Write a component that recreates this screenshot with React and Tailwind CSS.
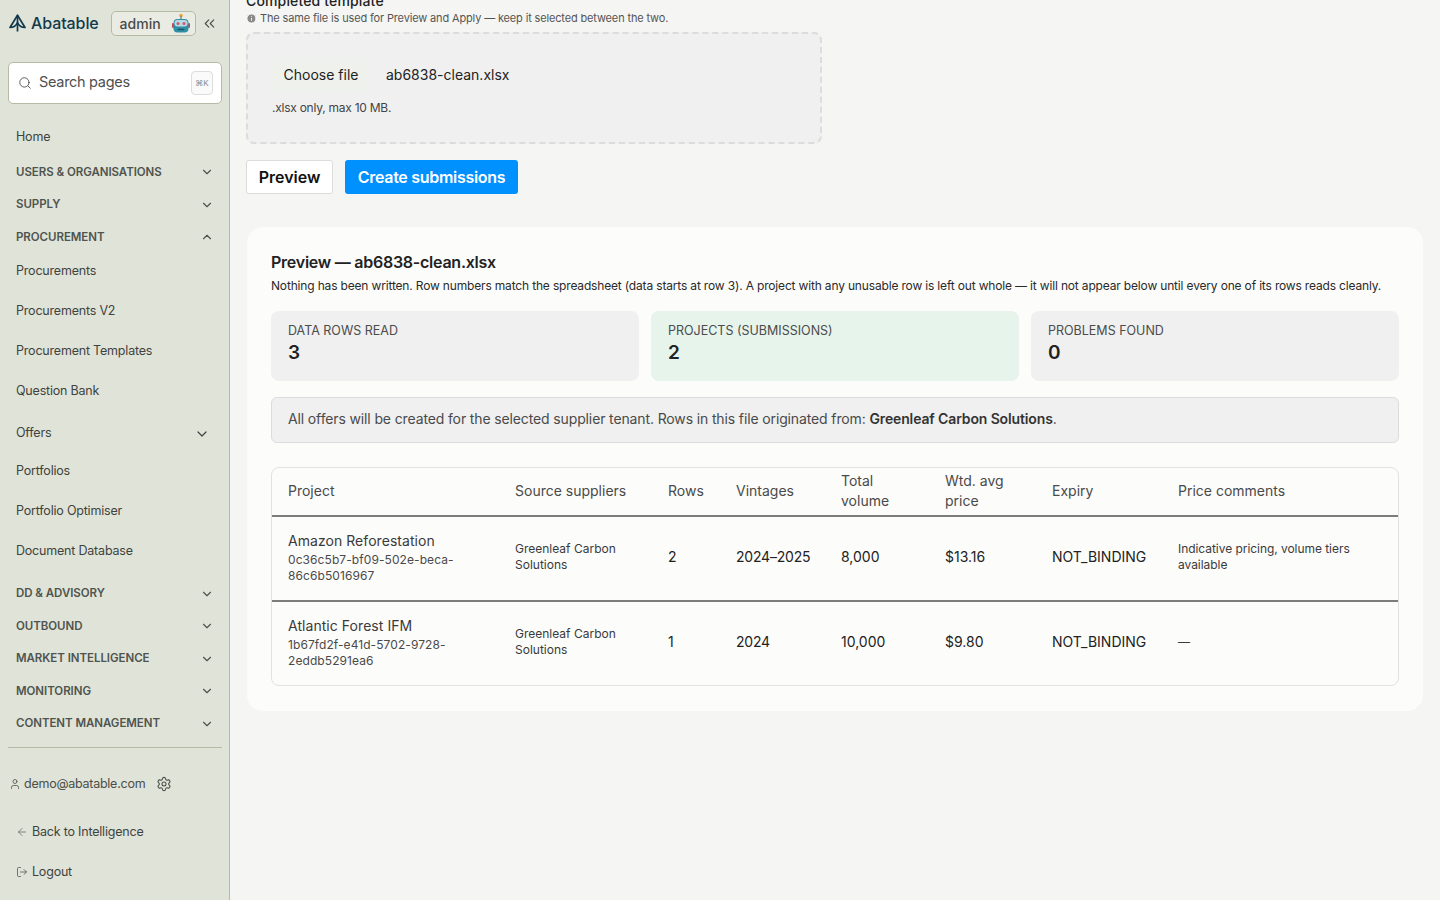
import React from 'react';
import { ChevronDown, ChevronUp, ChevronsLeft, Search, User, Settings, ArrowLeft, LogOut, Info } from 'lucide-react';

const SectionRow = ({ label, open }) => (
    <div className="flex items-center justify-between h-[32.5px] pl-4 pr-[15px] text-[11.5px] tracking-[-0.05px] font-semibold text-[#4f544f] uppercase">
        <span className="pb-[2px]">{label}</span>
        <span className="pb-[2px]">{open ? <ChevronUp size={14} strokeWidth={2} /> : <ChevronDown size={14} strokeWidth={2} />}</span>
    </div>
);

const LinkRow = ({ label }) => (
    <div className="flex items-center h-10 pl-4 text-[12.5px] tracking-[-0.2px] text-[#3f433f]">{label}</div>
);

const Stat = ({ label, value, green }) => (
    <div className={`flex-1 h-[70px] rounded-lg px-[17px] pt-[11px] ${green ? 'bg-[#e6f4ec]' : 'bg-[#f0f0f0]'}`}>
        <div className="text-[12.5px] leading-[18px] text-[#4b4b4b]">{label}</div>
        <div className="text-[19px] leading-[26px] font-semibold text-[#222]">{value}</div>
    </div>
);

const rows = [
    { name: 'Amazon Reforestation', id: ['0c36c5b7-bf09-502e-beca-', '86c6b5016967'], rows: '2', vintages: '2024–2025', volume: '8,000', price: '$13.16', comments: ['Indicative pricing, volume tiers', 'available'] },
    { name: 'Atlantic Forest IFM', id: ['1b67fd2f-e41d-5702-9728-', '2eddb5291ea6'], rows: '1', vintages: '2024', volume: '10,000', price: '$9.80', comments: ['—'] },
];

export default function App() {
    return (
        <div className="flex h-[900px] overflow-hidden bg-[#f5f5f3] font-['Inter',sans-serif]">
            {/* Sidebar */}
            <aside className="w-[230px] shrink-0 h-full bg-[#e0e3d8] border-r border-[#b6baa5] flex flex-col">
                <div className="flex items-center h-[46px] pl-[9px] mb-4">
                    <svg width="17" height="18" viewBox="0 0 17 18" fill="none" stroke="#123a4d" strokeWidth="1.7">
                        <path d="M8.5 1.2 L1 13.5 C4 13.5 7 12 8.5 8.5 C10 12 13 13.5 16 13.5 Z" strokeLinejoin="round" />
                        <path d="M8.5 1.2 V17.5" />
                    </svg>
                    <span className="ml-[5px] text-[16px] tracking-[-0.1px] font-medium text-[#123a4d]">Abatable</span>
                    <div className="ml-3 flex items-center justify-between w-[85px] h-[25px] rounded-[5px] border border-[#b6baa5] bg-[#eaece4] pl-2 pr-[5px]">
                        <span className="text-[14px] font-medium text-[#4a4a4a]">admin</span>
                        <svg width="18" height="20" viewBox="0 0 18 20">
                            <circle cx="9" cy="2.6" r="1.8" fill="#e8a33a" />
                            <rect x="8.3" y="3" width="1.4" height="4" fill="#7c8b93" />
                            <rect x="0" y="10" width="2" height="5" rx="1" fill="#c0485a" />
                            <rect x="16" y="10" width="2" height="5" rx="1" fill="#c0485a" />
                            <rect x="1.5" y="6" width="15" height="13.5" rx="4" fill="#2f8fa6" />
                            <rect x="2.5" y="7" width="13" height="6.5" rx="3" fill="#b9d9e4" />
                            <circle cx="6" cy="10.4" r="1.5" fill="#d0586a" />
                            <circle cx="12" cy="10.4" r="1.5" fill="#d0586a" />
                            <rect x="5.5" y="15.8" width="7" height="1.5" rx=".7" fill="#1e5566" />
                        </svg>
                    </div>
                    <ChevronsLeft size={17} className="ml-[5px] text-[#4a4f4a]" strokeWidth={1.6} />
                </div>

                <div className="ml-2 w-[214px] h-[42px] rounded-[5px] border border-[#b6baa5] bg-white flex items-center pl-[9px] pr-2">
                    <Search size={14} className="text-[#555]" strokeWidth={1.6} />
                    <span className="ml-[7px] pb-[2px] flex-1 text-[14.5px] tracking-[-0.3px] text-[#4f4f4f]">Search pages</span>
                    <span className="w-[22px] h-[24px] rounded-[4px] border border-[#dddddd] bg-[#fafafa] flex items-center justify-center text-[8px] text-[#8a8a8a]">⌘K</span>
                </div>

                <nav className="mt-[13px]">
                    <LinkRow label="Home" />
                    <SectionRow label="Users & Organisations" />
                    <SectionRow label="Supply" />
                    <SectionRow label="Procurement" open />
                    <div className="-mt-[3px]">
                        <LinkRow label="Procurements" />
                        <LinkRow label="Procurements V2" />
                        <LinkRow label="Procurement Templates" />
                        <LinkRow label="Question Bank" />
                    </div>
                    <div className="flex items-center justify-between h-10 pt-1 pl-4 pr-[19px] text-[12.5px] tracking-[-0.2px] text-[#3f433f]">
                        <span>Offers</span>
                        <ChevronDown size={16} strokeWidth={1.8} />
                    </div>
                    <LinkRow label="Portfolios" />
                    <LinkRow label="Portfolio Optimiser" />
                    <LinkRow label="Document Database" />
                    <div className="mt-[7px]">
                        <SectionRow label="DD & Advisory" />
                        <SectionRow label="Outbound" />
                        <SectionRow label="Market Intelligence" />
                        <SectionRow label="Monitoring" />
                        <SectionRow label="Content Management" />
                    </div>
                </nav>

                <div className="ml-2 w-[214px] mt-[6px] border-t border-[#b6baa5]" />

                <div className="flex items-center h-[72px] pl-[9px] text-[12.5px] tracking-[-0.25px] text-[#4a4f4a]">
                    <User size={12} strokeWidth={1.6} />
                    <span className="ml-[3px]">demo@abatable.com</span>
                    <Settings size={16} className="ml-[11px]" strokeWidth={1.6} />
                </div>
                <div className="flex items-center h-10 -mt-2 pl-4 text-[12.5px] tracking-[-0.2px] text-[#3f433f]">
                    <ArrowLeft size={12} className="mr-[4px] text-[#6b6f6b]" strokeWidth={1.6} />
                    Back to Intelligence
                </div>
                <div className="flex items-center h-10 pl-4 text-[12.5px] tracking-[-0.2px] text-[#3f433f]">
                    <LogOut size={12} className="mr-[4px] text-[#555]" strokeWidth={1.6} />
                    Logout
                </div>
            </aside>

            {/* Main */}
            <main className="flex-1 min-w-0 pl-4 pr-[17px]">
                <div className="-mt-2 h-[18px] text-[14px] leading-[18px] tracking-[0.15px] font-medium text-[#222]">Completed template</div>
                <div className="flex items-center h-[18px] -mt-[1px] text-[11px] tracking-[-0.15px] text-[#555]">
                    <Info size={11} className="mr-[3px] text-white fill-[#8a8a8a]" strokeWidth={2} />
                    The same file is used for Preview and Apply — keep it selected between the two.
                </div>
                <div className="mt-[5px] w-[576px] h-[112px] rounded-lg border-2 border-dashed border-[#dcdcdc] bg-[#f0f0f0] pl-6 pt-[23px]">
                    <div className="flex items-center">
                        <span className="h-[34px] w-[95px] flex items-center justify-center pl-[3px] bg-[#eff1ec] text-[14px] text-[#1e1e1e]">Choose file</span>
                        <span className="ml-[19px] text-[14px] text-[#222]">ab6838-clean.xlsx</span>
                    </div>
                    <div className="mt-[9px] text-[12px] leading-[16px] tracking-[-0.25px] text-[#444]">.xlsx only, max 10 MB.</div>
                </div>
                <div className="flex gap-3 mt-4">
                    <button className="h-[34px] w-[87px] rounded-[3px] border border-[#dcdcdc] bg-white text-[16px] font-semibold text-[#111]">Preview</button>
                    <button className="h-[34px] w-[173px] rounded-[3px] bg-[#0091ff] text-[16px] tracking-[-0.3px] font-semibold text-white">Create submissions</button>
                </div>

                {/* Preview card */}
                <section className="mt-[33px] ml-px h-[484px] rounded-2xl bg-[#fcfcfb] p-6">
                    <h2 className="text-[16px] leading-[22px] tracking-[-0.25px] font-semibold text-[#222]">Preview — ab6838-clean.xlsx</h2>
                    <p className="mt-[4px] text-[12px] leading-[18px] tracking-[-0.167px] text-[#2a2a2a] whitespace-nowrap">Nothing has been written. Row numbers match the spreadsheet (data starts at row 3). A project with any unusable row is left out whole — it will not appear below until every one of its rows reads cleanly.</p>
                    <div className="flex gap-3 mt-4">
                        <Stat label="DATA ROWS READ" value="3" />
                        <Stat label="PROJECTS (SUBMISSIONS)" value="2" green />
                        <Stat label="PROBLEMS FOUND" value="0" />
                    </div>
                    <div className="mt-4 h-[46px] rounded-md border border-[#dcdcdc] bg-[#f0f0f0] flex items-center px-4 pb-[3px] text-[14px] tracking-[-0.13px] text-[#4a4a4a]">
                        <span>All offers will be created for the selected supplier tenant. Rows in this file originated from: <b className="font-semibold text-[#333]">Greenleaf Carbon Solutions</b>.</span>
                    </div>
                    <div className="mt-6 rounded-lg border border-[#e2e2e2] overflow-hidden">
                        <table className="w-full table-fixed border-collapse text-left">
                            <colgroup>
                                <col className="w-[227px]" />
                                <col className="w-[153px]" />
                                <col className="w-[68px]" />
                                <col className="w-[105px]" />
                                <col className="w-[104px]" />
                                <col className="w-[107px]" />
                                <col className="w-[126px]" />
                                <col />
                            </colgroup>
                            <thead>
                                <tr className="h-[48px] border-b-2 border-[#7c7c7c] text-[14px] leading-5 text-[#4a4a4a]">
                                    <th className="px-4 pb-[2px] font-normal">Project</th>
                                    <th className="px-4 pb-[2px] font-normal">Source suppliers</th>
                                    <th className="px-4 pb-[2px] font-normal">Rows</th>
                                    <th className="px-4 pb-[2px] font-normal">Vintages</th>
                                    <th className="px-4 pb-[2px] font-normal">Total<br />volume</th>
                                    <th className="px-4 pb-[2px] font-normal">Wtd. avg<br />price</th>
                                    <th className="px-4 pb-[2px] font-normal">Expiry</th>
                                    <th className="px-4 pb-[2px] font-normal">Price comments</th>
                                </tr>
                            </thead>
                            <tbody>
                                {rows.map((r, i) => (
                                    <tr key={r.name} className={`text-[14px] text-[#222] ${i === 0 ? 'h-[85px] border-b-2 border-[#7c7c7c]' : 'h-[84px]'}`}>
                                        <td className="px-4 pb-[2px]">
                                            <div className="text-[14px] leading-[18px] tracking-[0.05px] text-[#3a3a3a]">{r.name}</div>
                                            <div className="mt-[2px] text-[12px] leading-4 tracking-[0.08px] text-[#4a4a4a]">{r.id[0]}<br />{r.id[1]}</div>
                                        </td>
                                        <td className="px-4 pb-[3px] text-[12px] leading-4 text-[#3a3a3a]">Greenleaf Carbon<br />Solutions</td>
                                        <td className="px-4 pb-1">{r.rows}</td>
                                        <td className="px-4 pb-1 whitespace-nowrap tracking-[-0.2px]">{r.vintages}</td>
                                        <td className="px-4 pb-1">{r.volume}</td>
                                        <td className="px-4 pb-1">{r.price}</td>
                                        <td className="px-4 pb-1">NOT_BINDING</td>
                                        <td className="px-4 pb-[3px] text-[12px] leading-4 tracking-[-0.05px] text-[#3a3a3a]">
                                            {r.comments.map((c) => <div key={c}>{c}</div>)}
                                        </td>
                                    </tr>
                                ))}
                            </tbody>
                        </table>
                    </div>
                </section>
            </main>
        </div>
    );
}
